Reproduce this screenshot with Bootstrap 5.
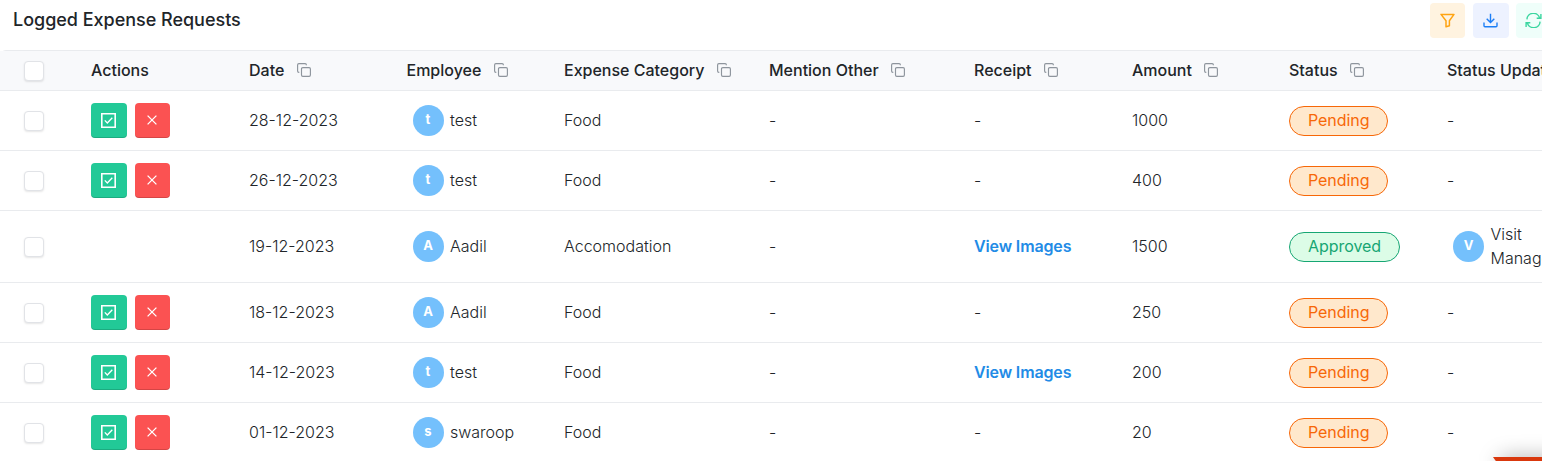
<!DOCTYPE html>
<html lang="en">
<head>
<meta charset="utf-8">
<meta name="viewport" content="width=device-width, initial-scale=1">
<title>Logged Expense Requests</title>
<link href="https://cdn.jsdelivr.net/npm/bootstrap@5.3.0/dist/css/bootstrap.min.css" rel="stylesheet">
<style>
body{font-family:Inter,"Liberation Sans",sans-serif;font-size:16px;color:#212529;height:461px;overflow:hidden;background:#fff}
.page-head{height:50px;padding-left:13px}
.page-title{font-size:18px;font-weight:500;line-height:40px;margin:0;color:#212529;letter-spacing:-.02px}
.tool-btns{position:absolute;left:1430px;top:3px;gap:8px}
.tool{width:35px;height:35px;border-radius:4px;flex:none}
.tool-filter{background:#fff3e0;color:#ffa412}
.tool-down{background:#edf2ff;color:#1c7ef6;width:36px;padding-right:1px}
.tool-sync{background:#effefa;color:#3bd6a0;margin-left:-1px}
.grid-table{table-layout:fixed;width:1640px;margin:0;border-collapse:separate;border-spacing:0;border-top:1px solid #e9ebee;border-top-left-radius:6px}
.grid-table th,.grid-table td{padding:0 0 2px 13px;border:0;border-bottom:1px solid #e9ebee;white-space:nowrap;vertical-align:middle;color:#212529;background:transparent}
.grid-table thead tr{height:40px;background:#f8f9fb}
.grid-table th{font-weight:500;font-size:16px}
.grid-table td{font-weight:300;line-height:24px}
.grid-table tbody tr{height:60px}
.grid-table tbody tr.tall{height:72px}
.grid-table td:first-child,.grid-table th:first-child{padding-left:24px}
.grid-table .form-check-input{width:20px;height:20px;margin:2px 0 0;border:1px solid #e1e3e7;border-radius:4px;box-shadow:0 1px 2px rgba(0,0,0,.1);display:block;background-color:#fff}
.copy{width:14px;height:14px;margin-left:8px;margin-top:1px;color:#8e959d;flex:none}
.acts{margin-top:2px}
.act{width:35px;height:35px;border-radius:4px;padding:0;border:0;color:#fff;box-shadow:inset 0 -1px 0 rgba(0,0,0,.15)}
.act svg{margin:0 1px 1px 0}
.act-ok{background:#22c997;width:36px}
.act-no{background:#fb5252}
.avatar{width:31px;height:31px;border-radius:50%;background:#74c0fc;color:#fff;font-weight:700;font-size:13px;margin:2px 6.5px 0 6px;flex:none;line-height:1;padding-bottom:2px}
.pill{display:inline-block;height:30px;line-height:27px;border:1px solid;border-radius:15px;padding:0 17.5px 0 18px;vertical-align:middle;margin-top:2px;font-weight:400;letter-spacing:-.05px}
.pill-wait{color:#f76707;background:#ffe8cc}
.pill-ok{color:#16a673;background:#dcfce7}
.view{color:#228be6;font-weight:600;text-decoration:none;letter-spacing:-.13px}
.ribbon{position:absolute;left:1493px;top:457px;width:60px;height:20px;background:#d9380d;clip-path:polygon(0 0,100% 0,100% 100%,14px 100%)}
.ribbon-shade{position:absolute;left:1503px;top:461px;width:60px;height:10px;box-shadow:0 0 22px 2px rgba(0,0,0,.4)}
</style>
</head>
<body class="position-relative">
<svg class="d-none" xmlns="http://www.w3.org/2000/svg">
  <symbol id="i-copy" viewBox="0 0 14 14"><path d="M5.8 4.6h6.3a1.3 1.3 0 0 1 1.3 1.3v6.2a1.3 1.3 0 0 1-1.3 1.3H5.8a1.3 1.3 0 0 1-1.3-1.3V5.9a1.3 1.3 0 0 1 1.3-1.3zM2.3 9.4H1.9A1.3 1.3 0 0 1 .6 8.1V1.9A1.3 1.3 0 0 1 1.9.6h6.2a1.3 1.3 0 0 1 1.3 1.3v.4" fill="none" stroke="currentColor" stroke-width="1.15"/></symbol>
  <symbol id="i-ok" viewBox="0 0 15 15"><path d="M.8.8h13.4v13.4H.8z" fill="none" stroke="currentColor" stroke-width="1.6"/><path d="M3.8 7.4l2.5 2.6 5-5.2" fill="none" stroke="currentColor" stroke-width="1.3"/></symbol>
  <symbol id="i-x" viewBox="0 0 10 10"><path d="M.6.6l8.8 8.8M9.4.6L.6 9.4" fill="none" stroke="currentColor" stroke-width="1.3"/></symbol>
</svg>

<header class="page-head">
  <h1 class="page-title">Logged Expense Requests</h1>
  <div class="tool-btns d-flex">
    <span class="tool tool-filter d-flex align-items-center justify-content-center"><svg width="15" height="15" viewBox="0 0 15 15" fill="none" stroke="currentColor" stroke-width="1.5" stroke-linejoin="round"><path d="M1 1.4h13L9.4 7.7v5.1L6 13.8V7.7z"/></svg></span>
    <span class="tool tool-down d-flex align-items-center justify-content-center"><svg width="15" height="15" viewBox="0 0 15 15" fill="none" stroke="currentColor" stroke-width="1.4"><path d="M7.5.8v8.6M3.7 5.8l3.8 3.8 3.8-3.8M1 9.5v3.2a1 1 0 0 0 1 1h11a1 1 0 0 0 1-1V9.5"/></svg></span>
    <span class="tool tool-sync d-flex align-items-center justify-content-center"><svg width="17" height="15" viewBox="0 0 17 15" fill="none" stroke="currentColor" stroke-width="1.4"><path d="M1.9 6.4A6.5 6.5 0 0 1 14.6 4.8M15.9 1.1v4.2h-4.2M15.1 8.6A6.5 6.5 0 0 1 2.4 10.2M1.1 13.9V9.7h4.2"/></svg></span>
  </div>
</header>

<div class="overflow-hidden">
<table class="table grid-table">
  <colgroup><col style="width:78px"><col style="width:158px"><col style="width:157.5px"><col style="width:157.5px"><col style="width:205px"><col style="width:205px"><col style="width:158px"><col style="width:157px"><col style="width:158px"><col></colgroup>
  <thead><tr id="head"></tr></thead>
  <tbody id="rows"></tbody>
</table>
</div>
<div class="ribbon-shade"></div><div class="ribbon"></div>

<script src="https://cdn.jsdelivr.net/npm/bootstrap@5.3.0/dist/js/bootstrap.bundle.min.js"></script>
<script>
const box = '<input type="checkbox" class="form-check-input" aria-label="Select">';
const copy = '<svg class="copy"><use href="#i-copy"/></svg>';
const heads = ['Date','Employee','Expense Category','Mention Other','Receipt','Amount','Status','Status Updated By'];
document.getElementById('head').innerHTML = `<th>${box}</th><th>Actions</th>` +
  heads.map(h => `<th><span class="d-flex align-items-center"><span>${h}</span>&nbsp;${copy}</span></th>`).join('');

const person = (name, initial) => `<div class="d-flex align-items-center"><span class="avatar d-flex align-items-center justify-content-center">${initial}</span><span>${name}</span></div>`;
const actions = `<div class="acts d-flex gap-2"><button class="act act-ok d-flex align-items-center justify-content-center" aria-label="Approve"><svg width="15" height="15"><use href="#i-ok"/></svg></button><button class="act act-no d-flex align-items-center justify-content-center" aria-label="Reject"><svg width="10" height="10"><use href="#i-x"/></svg></button></div>`;
const data = [
  ['28-12-2023','test','t','Food',0,1000,0],
  ['26-12-2023','test','t','Food',0,400,0],
  ['19-12-2023','Aadil','A','Accomodation',1,1500,1],
  ['18-12-2023','Aadil','A','Food',0,250,0],
  ['14-12-2023','test','t','Food',1,200,0],
  ['01-12-2023','swaroop','s','Food',0,20,0]
];
document.getElementById('rows').innerHTML = data.map(([date,name,ini,cat,img,amt,ok]) => `<tr class="${ok ? 'tall' : ''}">
  <td>${box}</td><td>${ok ? '' : actions}</td><td>${date}</td><td>${person(name,ini)}</td><td>${cat}</td><td>-</td>
  <td>${img ? '<a class="view" href="#">View Images</a>' : '-'}</td><td>${amt}</td>
  <td><span class="pill ${ok ? 'pill-ok' : 'pill-wait'}">${ok ? 'Approved' : 'Pending'}</span></td>
  <td>${ok ? person('Visit<br>Manager','V') : '-'}</td></tr>`).join('');
</script>
</body>
</html>
